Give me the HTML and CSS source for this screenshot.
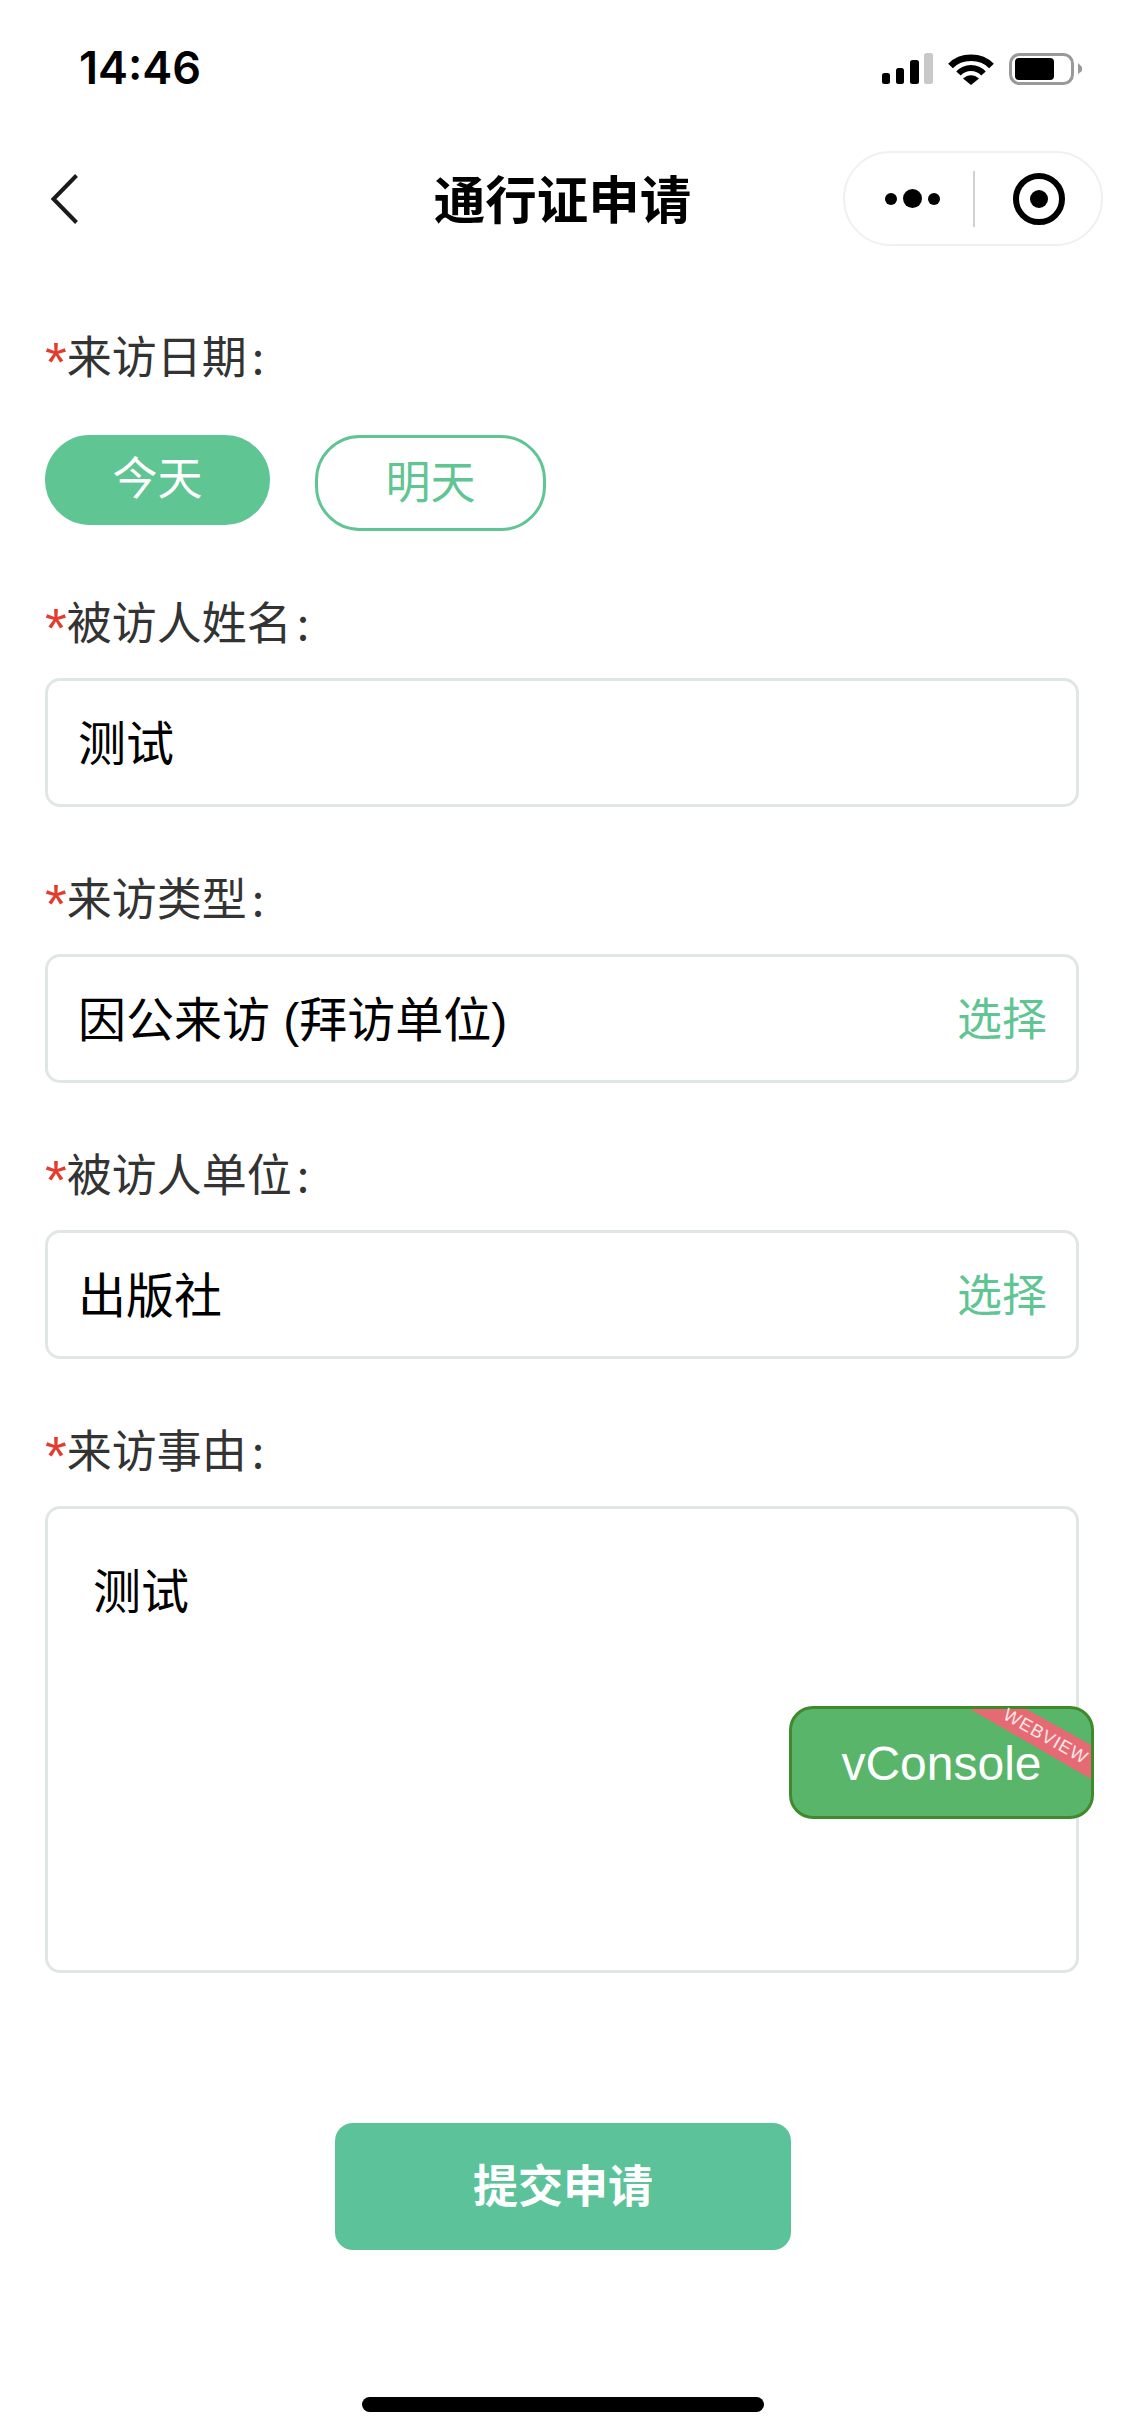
FILE: index.html
```html
<!DOCTYPE html>
<html lang="zh-CN">
<head>
    <meta charset="UTF-8">
    <title>通行证申请</title>
    <link rel="stylesheet" href="styles.css">
</head>
<body>
<div id="page">
    <div class="status">
        <span class="time">14:46</span>
        <div class="status-icons">
            <svg width="51" height="32" viewBox="0 0 51 32">
                <rect x="0" y="20" width="8" height="11" rx="2.5" fill="#000"/>
                <rect x="14" y="15" width="8" height="16" rx="2.5" fill="#000"/>
                <rect x="28" y="7" width="9" height="24" rx="2.5" fill="#000"/>
                <rect x="42" y="0" width="9" height="31" rx="2.5" fill="#c8c8c8"/>
            </svg>
            <svg width="46" height="32" viewBox="0 0 46 32">
                <path d="M2.5 13 C13 2 33 2 43.5 13" fill="none" stroke="#000" stroke-width="6.5"/>
                <path d="M10.5 20.5 C17 13 29 13 35.5 20.5" fill="none" stroke="#000" stroke-width="6"/>
                <path d="M15 25.5 C20 21 26 21 31 25.5 L23 32 Z" fill="#000"/>
            </svg>
            <svg width="73" height="33" viewBox="0 0 73 33">
                <rect x="1.5" y="1.5" width="62" height="29" rx="9" fill="none" stroke="#999" stroke-width="3"/>
                <rect x="6" y="5" width="39" height="22" rx="4" fill="#000"/>
                <path d="M69 10 L73 14 L73 18 L69 21 Z" fill="#999"/>
            </svg>
        </div>
    </div>

    <div class="nav">
        <svg class="back" width="28" height="50" viewBox="0 0 28 50">
            <path d="M26.5 1.5 L3.5 25 L26.5 48.5" fill="none" stroke="#1a1a1a" stroke-width="4"/>
        </svg>
        <div class="nav-title">通行证申请</div>
        <div class="capsule">
            <div class="dots"><i></i><b></b><i></i></div>
            <div class="capsule-line"></div>
            <div class="target"><span></span></div>
        </div>
    </div>

    <form class="form">
        <div class="label first"><em>*</em>来访日期<i>:</i></div>
        <div class="days">
            <div class="day day-on">今天</div>
            <div class="day">明天</div>
        </div>

        <div class="label"><em>*</em>被访人姓名<i>:</i></div>
        <div class="field">测试</div>

        <div class="label"><em>*</em>来访类型<i>:</i></div>
        <div class="field">因公来访 (拜访单位)<span class="pick">选择</span></div>

        <div class="label"><em>*</em>被访人单位<i>:</i></div>
        <div class="field">出版社<span class="pick">选择</span></div>

        <div class="label"><em>*</em>来访事由<i>:</i></div>
        <div class="area">测试</div>

        <div class="submit">提交申请</div>
    </form>

    <div class="home-bar"></div>

    <div class="vconsole">
        vConsole
        <div class="ribbon"></div>
        <span class="ribbon-text">WEBVIEW</span>
    </div>
</div>
</body>
</html>
```

FILE: styles.css
```css
body {
    margin: 0;
    background: #fff;
    font-family: "Liberation Sans", "Noto Sans CJK SC", sans-serif;
}

#page {
    position: relative;
    width: 1125px;
    height: 2436px;
    overflow: hidden;
}

.status {
    height: 136px;
    box-sizing: border-box;
    padding: 44px 43px 0 79px;
    display: flex;
    justify-content: space-between;
    align-items: flex-start;
}

.time {
    font-family: Inter, "Liberation Sans", sans-serif;
    font-size: 45px;
    font-weight: 600;
    line-height: 48px;
    color: #000;
}

.status-icons {
    display: flex;
    align-items: flex-start;
    gap: 15px;
    margin-top: 9px;
}

.nav {
    position: relative;
    height: 125px;
    padding: 0 22px 0 50px;
    display: flex;
    justify-content: space-between;
    align-items: center;
}

.nav-title {
    position: absolute;
    left: 0;
    right: 0;
    padding-bottom: 5px;
    text-align: center;
    font-size: 51.5px;
    font-weight: bold;
    color: #000;
}

.capsule {
    width: 260px;
    height: 95px;
    box-sizing: border-box;
    border: 2px solid #f0f0f0;
    border-radius: 48px;
    display: flex;
    align-items: center;
}

.dots {
    width: 128px;
    box-sizing: border-box;
    padding-left: 6px;
    display: flex;
    justify-content: center;
    align-items: center;
    gap: 6px;
}

.dots i {
    width: 12px;
    height: 12px;
    border-radius: 50%;
    background: #000;
}

.dots b {
    width: 19px;
    height: 19px;
    border-radius: 50%;
    background: #000;
}

.capsule-line {
    width: 2px;
    height: 56px;
    background: #d0d0d0;
}

.target {
    width: 52px;
    height: 52px;
    margin-left: 38px;
    box-sizing: border-box;
    border: 6px solid #000;
    border-radius: 50%;
    display: flex;
    justify-content: center;
    align-items: center;
}

.target span {
    width: 18px;
    height: 18px;
    border-radius: 50%;
    background: #000;
}

.form {
    padding: 0 46px 0 45px;
}

.label {
    margin-top: 62px;
    height: 58px;
    line-height: 55px;
    font-size: 45px;
    color: #333;
    font-family: "Noto Sans CJK SC", sans-serif;
}

.first {
    margin-top: 66px;
}

.label em {
    font-family: "Liberation Sans", sans-serif;
    font-style: normal;
    font-size: 56px;
    line-height: 0;
    vertical-align: -7px;
    color: #e33b2e;
}

.label i {
    font-style: normal;
    margin-left: 5px;
}

.days {
    display: flex;
    gap: 45px;
    margin-top: 50px;
    align-items: flex-start;
}

.day {
    width: 231px;
    height: 96px;
    box-sizing: border-box;
    border: 3px solid #5fc592;
    border-radius: 45px;
    font-size: 45px;
    line-height: 92px;
    text-align: center;
    color: #5fc592;
}

.day-on {
    width: 225px;
    height: 90px;
    line-height: 84px;
    background: #5fc592;
    color: #fff;
}

.field {
    margin-top: 27px;
    height: 129px;
    box-sizing: border-box;
    padding: 0 29px 5px 30px;
    border: 3px solid #e0e6e5;
    border-radius: 15px;
    display: flex;
    justify-content: space-between;
    align-items: center;
    font-size: 48px;
    color: #000;
}

.pick {
    font-size: 45px;
    color: #5fc592;
}

.area {
    margin-top: 27px;
    height: 467px;
    box-sizing: border-box;
    padding: 54px 45px;
    border: 3px solid #e0e6e5;
    border-radius: 15px;
    font-size: 48px;
    line-height: 60px;
    color: #000;
}

.submit {
    width: 456px;
    height: 127px;
    margin: 150px 0 0 290px;
    border-radius: 18px;
    background: #5cc29a;
    color: #fff;
    font-size: 45px;
    font-weight: bold;
    line-height: 129px;
    text-align: center;
}

.home-bar {
    position: absolute;
    left: 362px;
    top: 2397px;
    width: 402px;
    height: 15px;
    border-radius: 8px;
    background: #000;
}

.vconsole {
    position: absolute;
    left: 789px;
    top: 1706px;
    width: 305px;
    height: 113px;
    box-sizing: border-box;
    border: 3px solid #3f8a2c;
    border-radius: 24px;
    background: #58b569;
    color: #fff;
    font-size: 48px;
    line-height: 109px;
    text-align: center;
}

.ribbon {
    position: absolute;
    left: 0;
    top: 0;
    width: 100%;
    height: 100%;
    background: #e66a73;
    clip-path: polygon(178px 0, 234px 0, 299px 36px, 299px 70px);
}

.ribbon-text {
    position: absolute;
    left: 207px;
    top: 18px;
    width: 93px;
    font-size: 18px;
    line-height: 18px;
    letter-spacing: 1px;
    white-space: nowrap;
    text-align: center;
    color: #fde8ea;
    transform: rotate(29.5deg);
}
```
